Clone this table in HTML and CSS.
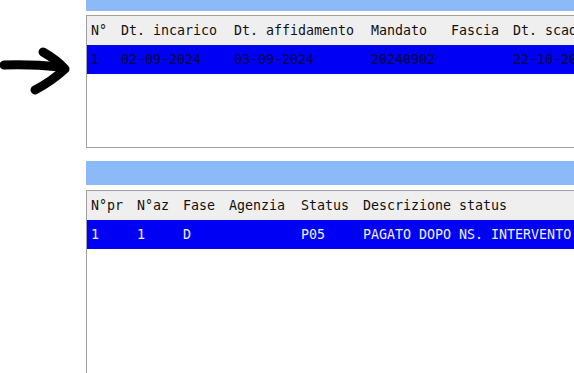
FILE: index.html
```html
<!DOCTYPE html>
<html lang="it">
<head>
  <meta charset="UTF-8">
  <title>Pratiche</title>
  <link rel="stylesheet" href="styles.css">
</head>
<body>
<div class="screen">
  <div class="gutter">
    <svg class="pointer" width="86" height="100" viewBox="0 0 86 100" xmlns="http://www.w3.org/2000/svg">
      <path d="M4 65 Q32 64 60 67" fill="none" stroke="#000" stroke-width="9" stroke-linecap="round"/>
      <path d="M43 52 Q57 60 65 69 Q52 81 35 90" fill="none" stroke="#000" stroke-width="9" stroke-linecap="round" stroke-linejoin="round"/>
    </svg>
  </div>

  <div class="panels">
    <section class="panel panel-top">
      <div class="panel-bar thin"></div>
      <div class="grid-box short">
        <table class="grid">
          <tr class="head">
            <th class="w30">N°</th>
            <th class="w113">Dt. incarico</th>
            <th class="w137">Dt. affidamento</th>
            <th class="w80">Mandato</th>
            <th class="w62">Fascia</th>
            <th class="w113">Dt. scadenza</th>
            <th class="fill"></th>
          </tr>
          <tr class="selected dark">
            <td>1</td>
            <td>02-09-2024</td>
            <td>03-09-2024</td>
            <td>20240902</td>
            <td></td>
            <td>22-10-2024</td>
            <td class="fill"></td>
          </tr>
        </table>
      </div>
    </section>

    <section class="panel panel-bottom">
      <div class="panel-bar"></div>
      <div class="grid-box tall">
        <table class="grid">
          <tr class="head">
            <th class="w46">N°pr</th>
            <th class="w46">N°az</th>
            <th class="w46">Fase</th>
            <th class="w72">Agenzia</th>
            <th class="w62">Status</th>
            <th class="w220">Descrizione status</th>
            <th class="fill"></th>
          </tr>
          <tr class="selected">
            <td>1</td>
            <td>1</td>
            <td>D</td>
            <td></td>
            <td>P05</td>
            <td>PAGATO DOPO NS. INTERVENTO</td>
            <td class="fill"></td>
          </tr>
        </table>
      </div>
    </section>
  </div>
</div>
</body>
</html>
```

FILE: styles.css
```css
:root {
  --bar: #8cbaf8;
  --border: #a0a0a0;
  --head-bg: #efefef;
  --sel-bg: #0000f4;
}
html, body {
  margin: 0;
  padding: 0;
  background: #fff;
  overflow: hidden;
}
body {
  font-family: "DejaVu Sans Mono", "Liberation Mono", monospace;
  font-size: 13.3px;
  color: #111;
}
.screen {
  display: grid;
  grid-template-columns: 86px 1fr;
  height: 373px;
}
.gutter .pointer {
  display: block;
}
.panels {
  display: flex;
  flex-direction: column;
  width: calc(100% + 40px);
}
.panel-bar {
  background: var(--bar);
  height: 24px;
  margin-bottom: 5px;
}
.panel-bar.thin {
  height: 11px;
  margin-bottom: 4px;
}
.panel-top {
  margin-bottom: 13px;
}
.grid-box {
  border: 1px solid var(--border);
  border-right: none;
  box-sizing: border-box;
  overflow: hidden;
}
.grid-box.short { height: 133px; }
.grid-box.tall { height: 200px; }
.grid {
  border-collapse: collapse;
  table-layout: fixed;
  width: 100%;
}
.grid th, .grid td {
  box-sizing: border-box;
  height: 29px;
  padding: 0 0 0 4px;
  white-space: nowrap;
  overflow: hidden;
  text-align: left;
  font-weight: normal;
  vertical-align: middle;
}
/* column widths */
.grid .w30 { width: 30px; }
.grid .w46 { width: 46px; }
.grid .w62 { width: 62px; }
.grid .w72 { width: 72px; }
.grid .w80 { width: 80px; }
.grid .w113 { width: 113px; }
.grid .w137 { width: 137px; }
.grid .w220 { width: 220px; }
.grid .fill {
  padding: 0;
}
.grid tr.head {
  background: var(--head-bg);
}
.grid tr.selected {
  background: var(--sel-bg);
  color: #eef0ff;
}
.grid tr.selected.dark {
  color: #06063e;
}
```
